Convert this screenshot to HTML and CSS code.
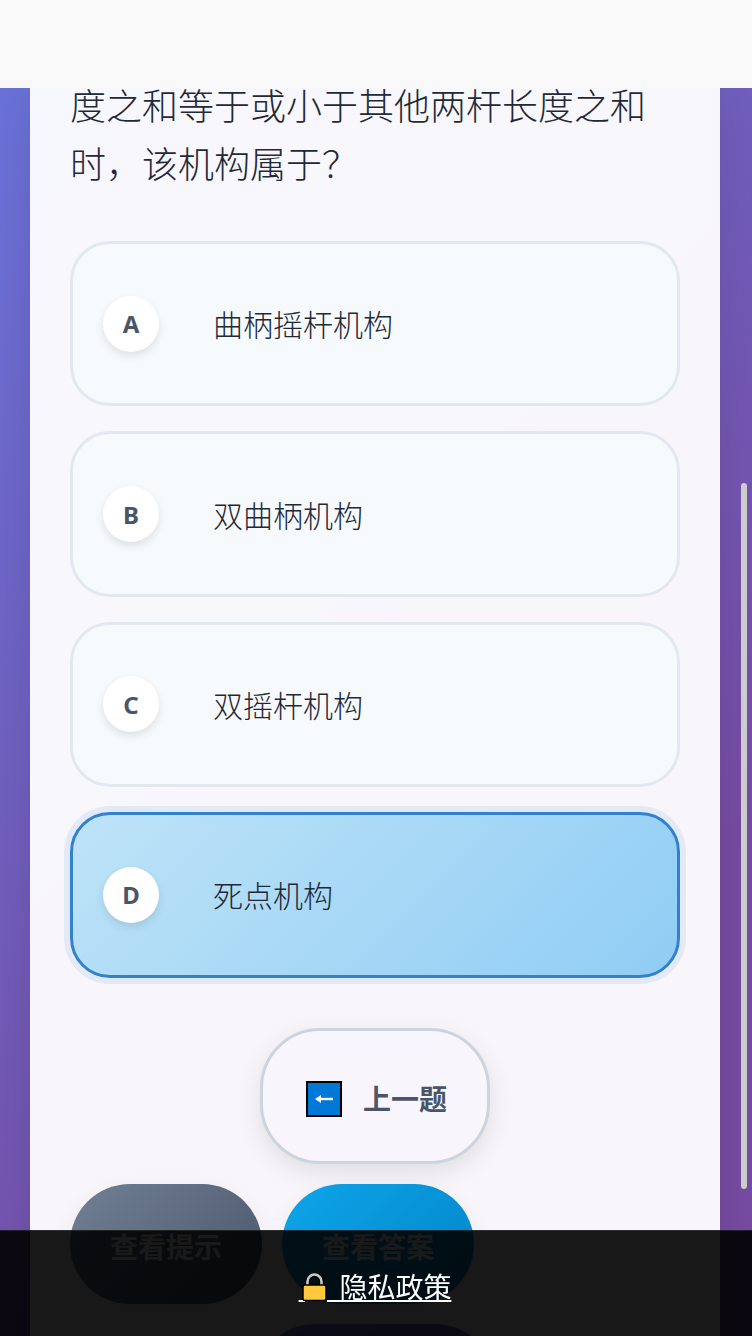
FILE: index.html
```html
<!DOCTYPE html>
<html lang="zh-CN">
<head>
    <meta charset="UTF-8">
    <meta name="viewport" content="width=device-width, initial-scale=1.0">
    <title>机械原理答题</title>
    <link rel="stylesheet" href="styles.css">
</head>
<body>
    <header class="top-bar"></header>

    <main class="page">
        <section class="card">
            <p class="question">度之和等于或小于其他两杆长度之和时，该机构属于？</p>

            <div class="options">
                <div class="option">
                    <span class="option-key">A</span>
                    <span class="option-text">曲柄摇杆机构</span>
                </div>
                <div class="option">
                    <span class="option-key">B</span>
                    <span class="option-text">双曲柄机构</span>
                </div>
                <div class="option">
                    <span class="option-key">C</span>
                    <span class="option-text">双摇杆机构</span>
                </div>
                <div class="option selected">
                    <span class="option-key">D</span>
                    <span class="option-text">死点机构</span>
                </div>
            </div>

            <div class="nav-row">
                <button class="btn-prev">
                    <svg class="arrow-icon" viewBox="0 0 36 36" aria-hidden="true">
                        <rect x="1" y="1" width="34" height="34" fill="#0078d7" stroke="#000" stroke-width="2"/>
                        <path d="M11 18H27" stroke="#fff" stroke-width="2.4" fill="none"/>
                        <path d="M9 18L15 14V22Z" fill="#fff"/>
                    </svg>
                    <span>上一题</span>
                </button>
            </div>

            <div class="actions">
                <button class="btn btn-hint">查看提示</button>
                <button class="btn btn-answer">查看答案</button>
            </div>

            <div class="next-row">
                <button class="btn btn-next" aria-label="下一题"></button>
            </div>
        </section>
    </main>

    <div class="scroll-thumb"></div>

    <footer class="privacy-bar">
        <a class="privacy-link" href="#">&nbsp;<svg class="lock-icon" viewBox="0 0 25 28" aria-hidden="true">
                <path d="M5.500 14V8.500a7 7 0 0 1 14 0V14" fill="none" stroke="#000" stroke-width="5"/>
                <path d="M5.500 14V8.500a7 7 0 0 1 14 0V14" fill="none" stroke="#c8c8c8" stroke-width="2.600"/>
                <rect x="1" y="12" width="23" height="15.500" rx="2" fill="#ffc83d" stroke="#000" stroke-width="1.500"/>
            </svg>&nbsp;&nbsp;隐私政策</a>
    </footer>
</body>
</html>
```

FILE: styles.css
```css
html, body {
    margin: 0;
    height: 100%;
}
body {
    position: relative;
    overflow: hidden;
    font-family: "Noto Sans CJK SC", "Noto Sans", sans-serif;
    background: linear-gradient(135deg, #6974db 0%, #764ba2 76%);
    color: #1f2937;
}
.top-bar {
    position: relative;
    z-index: 2;
    height: 88px;
    background-color: #f9f9f9;
}
.page {
    margin-top: -13px;
    padding: 0 32px 0 30px;
}
.card {
    padding: 0 40px;
    background-color: rgba(255, 255, 255, 0.95);
    box-shadow: 0 20px 40px rgba(0, 0, 0, 0.1);
}
.question {
    margin: 0 0 50px;
    font-size: 36px;
    font-weight: 300;
    line-height: 58px;
}
.options {
    display: flex;
    flex-direction: column;
    gap: 25px;
}
.option {
    display: flex;
    align-items: center;
    gap: 54px;
    height: 165.4px;
    padding: 0 30px;
    box-sizing: border-box;
    border: 3px solid #e2e8f0;
    border-radius: 40px;
    background-color: #f7fafc;
}
.option.selected {
    border-color: #3182ce;
    background: linear-gradient(135deg, #bee3f8 0%, #90cdf4 100%);
    box-shadow: 0 0 0 6px rgba(49, 130, 206, 0.1);
}
.option-key {
    display: flex;
    justify-content: center;
    align-items: center;
    width: 56px;
    height: 56px;
    border-radius: 50%;
    background-color: #fff;
    box-shadow: 0 4px 8px rgba(0, 0, 0, 0.1);
    color: #4a5568;
    font-family: "Noto Sans", sans-serif;
    font-size: 24px;
    font-weight: 700;
}
.option-text {
    margin-top: -1px;
    font-size: 30px;
    font-weight: 300;
    line-height: 42px;
}
.nav-row, .next-row {
    display: flex;
    justify-content: center;
    margin-top: 50px;
}
.next-row {
    margin-top: 20px;
}
button {
    border: none;
    font-family: inherit;
    cursor: pointer;
}
.btn-prev {
    display: flex;
    justify-content: center;
    align-items: center;
    gap: 21px;
    width: 230px;
    height: 136px;
    padding: 4px 0 0 3px;
    border: 3px solid #cbd5e0;
    border-radius: 60px;
    background-color: #f8f6fc;
    box-shadow: 0 8px 24px rgba(0, 0, 0, 0.1);
    color: #4a5568;
    font-size: 28px;
    font-weight: 700;
}
.arrow-icon {
    width: 36px;
    height: 36px;
    margin-top: 3px;
}
.actions {
    display: grid;
    grid-template-columns: 192px 192px;
    gap: 20px;
    margin-top: 20px;
}
.btn {
    height: 120px;
    padding: 4px 0 0;
    border-radius: 60px;
    color: #fff;
    font-size: 28px;
    font-weight: 700;
    box-shadow: 0 8px 24px rgba(0, 0, 0, 0.06);
}
.btn-hint {
    background: linear-gradient(135deg, #718096 0%, #4a5568 100%);
}
.btn-answer {
    background: linear-gradient(135deg, #0ea5e9 0%, #0284c7 100%);
}
.btn-next {
    width: 240px;
    background: linear-gradient(135deg, #667eea 0%, #764ba2 100%);
}
.scroll-thumb {
    position: absolute;
    top: 483px;
    right: 5px;
    width: 6px;
    height: 706px;
    border-radius: 3px;
    background-color: #ccc;
}
.privacy-bar {
    position: fixed;
    z-index: 3;
    left: 0;
    right: 0;
    bottom: 0;
    height: 106px;
    box-sizing: border-box;
    padding: 36px 2px 0 0;
    border-top: 1px solid rgba(255, 255, 255, 0.1);
    text-align: center;
    background-color: rgba(0, 0, 0, 0.9);
}
.privacy-link {
    color: #fff;
    font-size: 28px;
    line-height: 38px;
    text-decoration: underline;
}
.lock-icon {
    width: 25px;
    height: 28px;
    margin-left: -3px;
    vertical-align: -3px;
}
```
